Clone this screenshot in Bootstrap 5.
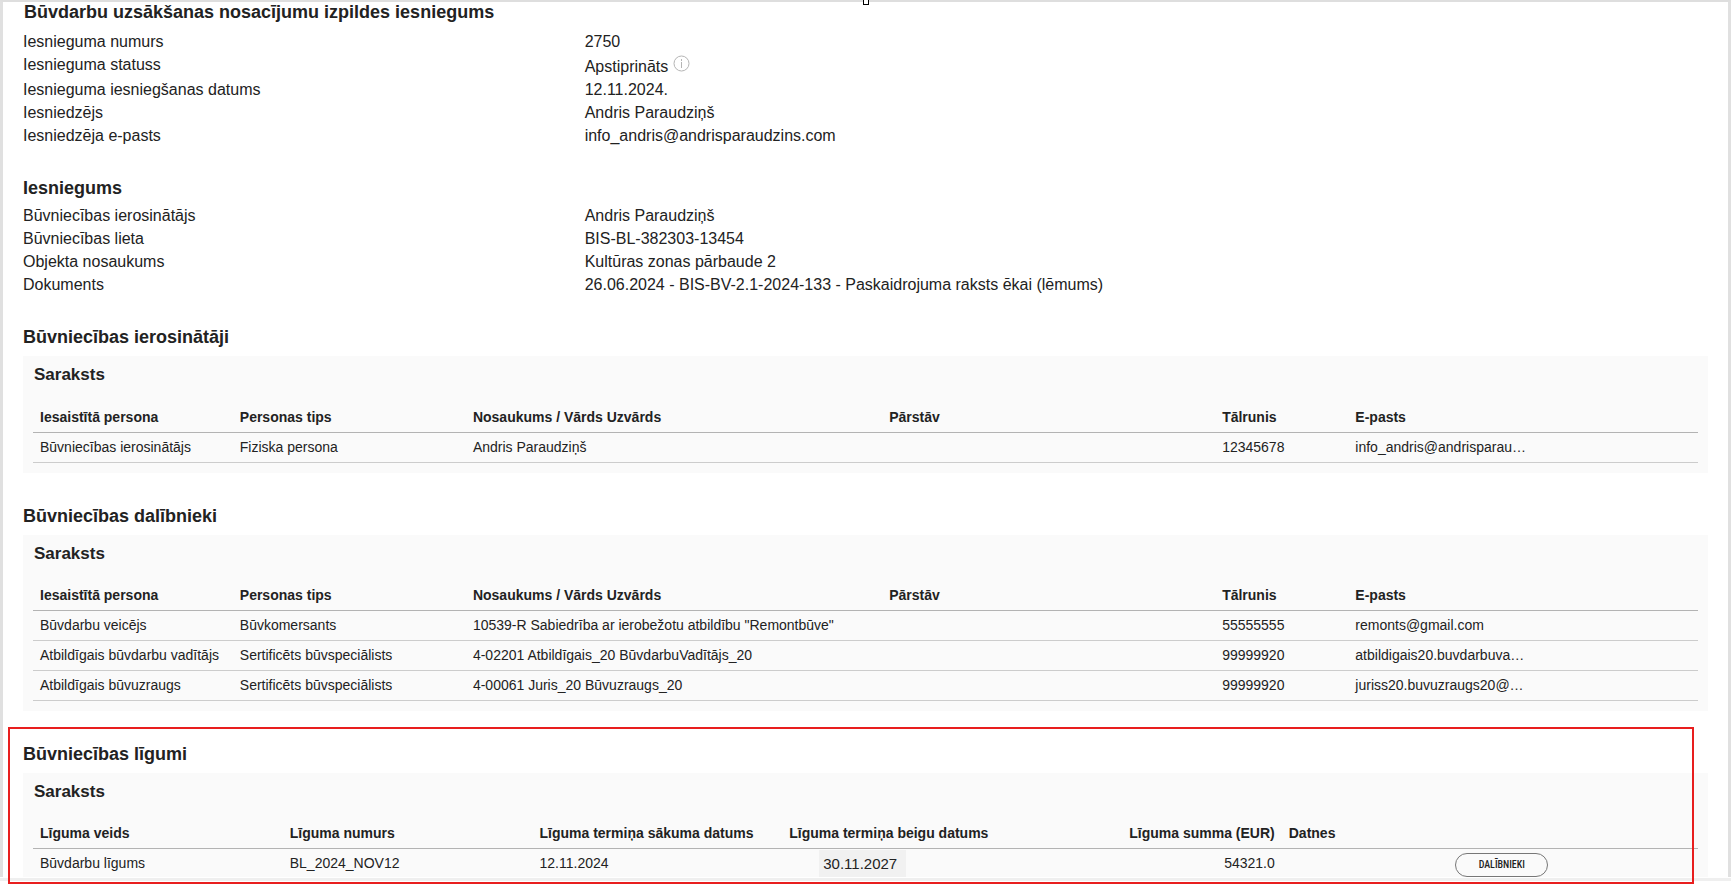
<!DOCTYPE html>
<html lang="lv">
<head>
<meta charset="utf-8">
<meta name="viewport" content="width=device-width, initial-scale=1">
<title>Būvdarbu uzsākšanas nosacījumu izpildes iesniegums</title>
<link href="https://cdn.jsdelivr.net/npm/bootstrap@5.3.0/dist/css/bootstrap.min.css" rel="stylesheet">
<style>
  body { font-family: "Liberation Sans", Arial, sans-serif; font-size: 16px; line-height: 23px; color: #222; background: #fff; }
  .sheet { border: 3px solid #e0e0e0; border-top: 2px solid #dedede; border-bottom: 0; padding: 0 20px; }
  h1, h2 { font-size: 18px; line-height: 20px; font-weight: 700; margin: 0; }
  h1 { padding: 0 0 8px 1px; }
  h2 { padding-bottom: 9px; }
  h3 { font-size: 17px; line-height: 22px; font-weight: 700; margin: 0; padding: 8px 1px 16px; }
  .facts { display: grid; grid-template-columns: 1fr 2fr; margin: 0; }
  .facts dt { font-weight: 400; }
  .facts dd { margin: 0; }
  .facts .status { height: 25px; padding-top: 2px; gap: 5px; }
  .info-icon { width: 17px; height: 17px; flex: none; }
  .block { padding-top: 31px; }
  .panel-block + .panel-block { padding-top: 33px; }
  .request h2 { padding-bottom: 6px; }
  .panel { background: #fafafa; padding: 0 10px 10px; }
  .grid-table { table-layout: fixed; width: 100%; margin: 0; font-size: 14px; line-height: 17px; --bs-table-bg: transparent; --bs-table-color: #222; }
  .grid-table > :not(caption) > * > * { height: 30px; padding: 6px 7px; border-bottom: 1px solid #ccc; white-space: nowrap; }
  .grid-table > thead > tr > th { border-bottom-color: #b3b3b3; font-weight: 700; }
  .contracts { position: relative; }
  .contracts .panel { padding-bottom: 0; }
  .contracts h3 { padding-bottom: 15px; }
  .contracts .grid-table > tbody > tr > td { height: 28px; border-bottom: 0; padding-bottom: 5px; }
  .contracts .grid-table > tbody > tr > .tight { padding: 1px 7px 0; }
  .outline { position: absolute; z-index: 1; top: 16px; left: -15px; right: 14px; bottom: -7px; border: 2px solid #e81e1e; pointer-events: none; }
  .end-date { display: inline-block; margin-left: 30px; width: 87px; height: 27px; line-height: 27px; font-size: 15px; padding-left: 4px; background: #f1f1f1; vertical-align: top; }
  .members { width: 93px; height: 24px; padding: 0; border: 1px solid #777; border-radius: 12px; background: transparent; color: #222; font: 500 10px/22px "Roboto Condensed", Roboto, sans-serif; margin-top: 3px; vertical-align: top; }
  .foot { border-top: 3px solid #efefef; margin-top: 1px; height: 7px; }
  .caret-mark { position: absolute; top: -2px; left: 50%; margin-left: -3px; width: 6px; height: 5px; border: 1px solid #000; border-top: 0; background: #fff; }
</style>
</head>
<body>
<main>
  <div class="sheet position-relative">
    <span class="caret-mark"></span>
    <section>
      <h1>Būvdarbu uzsākšanas nosacījumu izpildes iesniegums</h1>
      <dl class="facts">
        <dt>Iesnieguma numurs</dt><dd>2750</dd>
        <dt>Iesnieguma statuss</dt>
        <dd class="status d-flex align-items-start">Apstiprināts
          <svg class="info-icon" viewBox="0 0 17 17" fill="none" stroke="#b5b5b5"><circle cx="8.5" cy="8.5" r="7.5"/><path d="M8.5 7v6M8.5 4v2"/></svg>
        </dd>
        <dt>Iesnieguma iesniegšanas datums</dt><dd>12.11.2024.</dd>
        <dt>Iesniedzējs</dt><dd>Andris Paraudziņš</dd>
        <dt>Iesniedzēja e-pasts</dt><dd>info_andris@andrisparaudzins.com</dd>
      </dl>
    </section>
    <section class="block request">
      <h2>Iesniegums</h2>
      <dl class="facts">
        <dt>Būvniecības ierosinātājs</dt><dd>Andris Paraudziņš</dd>
        <dt>Būvniecības lieta</dt><dd>BIS-BL-382303-13454</dd>
        <dt>Objekta nosaukums</dt><dd>Kultūras zonas pārbaude 2</dd>
        <dt>Dokuments</dt><dd>26.06.2024 - BIS-BV-2.1-2024-133 - Paskaidrojuma raksts ēkai (lēmums)</dd>
      </dl>
    </section>
    <section class="block panel-block">
      <h2>Būvniecības ierosinātāji</h2>
      <div class="panel">
        <h3>Saraksts</h3>
        <table class="table grid-table">
          <colgroup><col style="width:12%"><col style="width:14%"><col style="width:25%"><col style="width:20%"><col style="width:8%"><col style="width:21%"></colgroup>
          <thead><tr><th>Iesaistītā persona</th><th>Personas tips</th><th>Nosaukums / Vārds Uzvārds</th><th>Pārstāv</th><th>Tālrunis</th><th>E-pasts</th></tr></thead>
          <tbody>
            <tr><td>Būvniecības ierosinātājs</td><td>Fiziska persona</td><td>Andris Paraudziņš</td><td></td><td>12345678</td><td>info_andris@andrisparau…</td></tr>
          </tbody>
        </table>
      </div>
    </section>
    <section class="block panel-block">
      <h2>Būvniecības dalībnieki</h2>
      <div class="panel">
        <h3>Saraksts</h3>
        <table class="table grid-table">
          <colgroup><col style="width:12%"><col style="width:14%"><col style="width:25%"><col style="width:20%"><col style="width:8%"><col style="width:21%"></colgroup>
          <thead><tr><th>Iesaistītā persona</th><th>Personas tips</th><th>Nosaukums / Vārds Uzvārds</th><th>Pārstāv</th><th>Tālrunis</th><th>E-pasts</th></tr></thead>
          <tbody>
            <tr><td>Būvdarbu veicējs</td><td>Būvkomersants</td><td>10539-R Sabiedrība ar ierobežotu atbildību "Remontbūve"</td><td></td><td>55555555</td><td>remonts@gmail.com</td></tr>
            <tr><td>Atbildīgais būvdarbu vadītājs</td><td>Sertificēts būvspeciālists</td><td>4-02201 Atbildīgais_20 BūvdarbuVadītājs_20</td><td></td><td>99999920</td><td>atbildigais20.buvdarbuva…</td></tr>
            <tr><td>Atbildīgais būvuzraugs</td><td>Sertificēts būvspeciālists</td><td>4-00061 Juris_20 Būvuzraugs_20</td><td></td><td>99999920</td><td>juriss20.buvuzraugs20@…</td></tr>
          </tbody>
        </table>
      </div>
    </section>
    <section class="block panel-block contracts">
      <h2>Būvniecības līgumi</h2>
      <div class="panel">
        <h3>Saraksts</h3>
        <table class="table grid-table">
          <colgroup><col style="width:15%"><col style="width:15%"><col style="width:15%"><col style="width:15%"><col style="width:15%"><col style="width:10%"><col style="width:15%"></colgroup>
          <thead><tr><th>Līguma veids</th><th>Līguma numurs</th><th>Līguma termiņa sākuma datums</th><th>Līguma termiņa beigu datums</th><th class="text-end">Līguma summa (EUR)</th><th>Datnes</th><th></th></tr></thead>
          <tbody>
            <tr><td>Būvdarbu līgums</td><td>BL_2024_NOV12</td><td>12.11.2024</td><td class="tight"><span class="end-date">30.11.2027</span></td><td class="text-end">54321.0</td><td></td><td class="tight"><button type="button" class="members">DALĪBNIEKI</button></td></tr>
          </tbody>
        </table>
      </div>
      <div class="outline"></div>
    </section>
  </div>
  <div class="foot"></div>
</main>
<script src="https://cdn.jsdelivr.net/npm/bootstrap@5.3.0/dist/js/bootstrap.bundle.min.js"></script>
</body>
</html>
